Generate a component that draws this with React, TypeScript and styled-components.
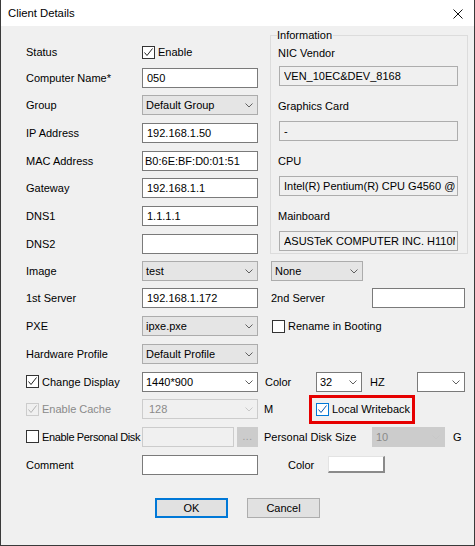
import React from 'react'
import styled, { createGlobalStyle } from 'styled-components'

const GlobalStyle = createGlobalStyle`
  html, body {
    margin: 0;
    padding: 0;
    background: #ffffff;
  }
  body {
    font-family: "Liberation Sans", Arial, sans-serif;
    font-size: 11px;
    color: #000000;
  }
  * {
    box-sizing: border-box;
  }
`

type CheckTone = 'normal' | 'disabled' | 'focus'
type ComboTone = 'list' | 'edit' | 'disabled' | 'locked'
type BoxTone = 'normal' | 'info' | 'disabled'

function Chevron({ muted }: { muted?: boolean }) {
  return (
    <svg width="8" height="5" viewBox="0 0 8 5">
      <polyline
        points="0.5,0.5 4,4 7.5,0.5"
        fill="none"
        stroke={muted ? '#c8c8c8' : '#606060'}
        strokeWidth="1"
      />
    </svg>
  )
}

function CheckBox({ checked, tone = 'normal' }: { checked?: boolean; tone?: CheckTone }) {
  const stroke = tone === 'disabled' ? '#b4b4b4' : tone === 'focus' ? '#0a58b0' : '#222222'
  return (
    <Box $tone={tone}>
      {checked && (
        <svg width="11" height="11" viewBox="0 0 11 11">
          <polyline points="1.5,5.5 4,8.5 9.5,1.5" fill="none" stroke={stroke} strokeWidth="1" />
        </svg>
      )}
    </Box>
  )
}

function Combo({
  value,
  w,
  ml,
  tone = 'list',
}: {
  value?: string
  w: number
  ml?: number
  tone?: ComboTone
}) {
  return (
    <ComboFrame $w={w} $ml={ml} $tone={tone}>
      <ComboText $tone={tone}>{value}</ComboText>
      <ArrowSlot>
        <Chevron muted={tone === 'disabled' || tone === 'locked'} />
      </ArrowSlot>
    </ComboFrame>
  )
}

function InfoItem({ label, value, first }: { label: string; value: string; first?: boolean }) {
  return (
    <InfoBlock $first={first}>
      <InfoLabel>{label}</InfoLabel>
      <TextBox $w={179} $ml={1} $tone="info" readOnly value={value} />
    </InfoBlock>
  )
}

export default function App() {
  return (
    <>
      <GlobalStyle />
      <Window>
        <TitleBar>
          <Title>Client Details</Title>
          <CloseButton aria-label="Close">
            <svg width="10" height="10" viewBox="0 0 10 10">
              <path d="M0.5 0.5 L9.5 9.5 M9.5 0.5 L0.5 9.5" stroke="#111" strokeWidth="1" />
            </svg>
          </CloseButton>
        </TitleBar>

        <Body>
          <Form>
            {/* ── Top: identity fields + information box ───────────── */}
            <TopSection>
              <LeftColumn>
                <StatusRow>
                  <Label $w={116}>Status</Label>
                  <CheckField>
                    <CheckBox checked />
                    Enable
                  </CheckField>
                </StatusRow>
                <Row>
                  <Label $w={116}>Computer Name*</Label>
                  <TextBox $w={116} readOnly value="050" />
                </Row>
                <Row>
                  <Label $w={116}>Group</Label>
                  <Combo w={116} value="Default Group" />
                </Row>
                <Row>
                  <Label $w={116}>IP Address</Label>
                  <TextBox $w={116} readOnly value="192.168.1.50" />
                </Row>
                <Row>
                  <Label $w={116}>MAC Address</Label>
                  <TextBox $w={116} $pad={2} readOnly value="B0:6E:BF:D0:01:51" />
                </Row>
                <Row>
                  <Label $w={116}>Gateway</Label>
                  <TextBox $w={116} readOnly value="192.168.1.1" />
                </Row>
                <Row>
                  <Label $w={116}>DNS1</Label>
                  <TextBox $w={116} readOnly value="1.1.1.1" />
                </Row>
                <Row>
                  <Label $w={116}>DNS2</Label>
                  <TextBox $w={116} readOnly value="" />
                </Row>
              </LeftColumn>

              <InfoGroup>
                <InfoLegend>Information</InfoLegend>
                <InfoList>
                  <InfoItem first label="NIC Vendor" value="VEN_10EC&DEV_8168" />
                  <InfoItem label="Graphics Card" value="-" />
                  <InfoItem label="CPU" value="Intel(R) Pentium(R) CPU G4560 @ 3.50GHz" />
                  <InfoItem label="Mainboard" value="ASUSTeK COMPUTER INC. H110M-F" />
                </InfoList>
              </InfoGroup>
            </TopSection>

            {/* ── Lower rows ───────────────────────────────────────── */}
            <LowerSection>
              <Row>
                <Label $w={116}>Image</Label>
                <Combo w={116} value="test" />
                <Combo w={92} ml={13} value="None" />
              </Row>
              <Row>
                <Label $w={116}>1st Server</Label>
                <TextBox $w={116} readOnly value="192.168.1.172" />
                <Label $w={101} $ml={13}>2nd Server</Label>
                <TextBox $w={93} readOnly value="" />
              </Row>
              <Row>
                <Label $w={116}>PXE</Label>
                <Combo w={116} value="ipxe.pxe" />
                <CheckField $ml={14}>
                  <CheckBox />
                  Rename in Booting
                </CheckField>
              </Row>
              <Row>
                <Label $w={116}>Hardware Profile</Label>
                <Combo w={116} value="Default Profile" />
              </Row>
              <Row>
                <CheckField $w={116}>
                  <CheckBox checked />
                  Change Display
                </CheckField>
                <Combo w={116} tone="edit" value="1440*900" />
                <Label $w={51} $ml={7}>Color</Label>
                <Combo w={46} tone="edit" value="32" />
                <Label $w={47} $ml={8}>HZ</Label>
                <Combo w={48} tone="edit" value="" />
              </Row>
              <Row>
                <CheckField $w={116} $muted>
                  <CheckBox checked tone="disabled" />
                  Enable Cache
                </CheckField>
                <Combo w={116} tone="disabled" value="128" />
                <Label $w={48} $ml={6}>M</Label>
                <Highlight>
                  <CheckField>
                    <CheckBox checked tone="focus" />
                    Local Writeback
                  </CheckField>
                </Highlight>
              </Row>
              <Row>
                <CheckField $w={116} $tight>
                  <CheckBox />
                  Enable Personal Disk
                </CheckField>
                <TextBox $w={92} $tone="disabled" readOnly value="" />
                <BrowseButton>...</BrowseButton>
                <Label $w={108} $ml={6}>Personal Disk Size</Label>
                <Combo w={73} tone="locked" value="10" />
                <Label $ml={8}>G</Label>
              </Row>
              <Row>
                <Label $w={116}>Comment</Label>
                <TextBox $w={116} readOnly value="" />
                <Label $w={40} $ml={30}>Color</Label>
                <ColorSwatch />
              </Row>
            </LowerSection>
          </Form>

          <ButtonRow>
            <DialogButton $default>OK</DialogButton>
            <DialogButton>Cancel</DialogButton>
          </ButtonRow>
        </Body>
      </Window>
    </>
  )
}

// ── Styled Components ────────────────────────────────────────────────────────

const Window = styled.div`
  width: 475px;
  height: 546px;
  display: flex;
  flex-direction: column;
  border: 1px solid #3a3a3a;
  border-top: none;
  background: #f0f0f0;
  overflow: hidden;
`

const TitleBar = styled.div`
  height: 26px;
  flex: 0 0 auto;
  display: flex;
  align-items: center;
  padding-left: 7px;
  background: #ffffff;
`

const Title = styled.div`
  flex: 1;
  font-size: 11.3px;
  color: #000000;
`

const CloseButton = styled.div`
  width: 32px;
  height: 26px;
  display: flex;
  align-items: center;
  justify-content: center;
  padding-top: 1px;
`

const Body = styled.div`
  flex: 1;
  display: flex;
  flex-direction: column;
  background: #f0f0f0;
`

const Form = styled.div`
  padding: 3px 0 0 25px;
  display: flex;
  flex-direction: column;
`

const TopSection = styled.div`
  display: flex;
  align-items: flex-start;
  gap: 12px;
`

const LeftColumn = styled.div`
  width: 232px;
  padding-top: 15px;
  display: flex;
  flex-direction: column;
  gap: 7.7px;
`

const Row = styled.div`
  height: 20px;
  display: flex;
  align-items: center;
  white-space: nowrap;
`

const StatusRow = styled(Row)`
  height: 16px;
`

const LowerSection = styled.div`
  margin-top: 6.8px;
  display: flex;
  flex-direction: column;
  gap: 7.7px;
`

const Label = styled.span<{ $w?: number; $ml?: number }>`
  flex: 0 0 auto;
  width: ${(p) => (p.$w ? `${p.$w}px` : 'auto')};
  margin-left: ${(p) => p.$ml ?? 0}px;
  white-space: nowrap;
`

const CheckField = styled.label<{ $w?: number; $ml?: number; $muted?: boolean; $tight?: boolean }>`
  flex: 0 0 auto;
  width: ${(p) => (p.$w ? `${p.$w}px` : 'auto')};
  margin-left: ${(p) => p.$ml ?? 0}px;
  display: flex;
  align-items: center;
  gap: 3px;
  white-space: nowrap;
  letter-spacing: ${(p) => (p.$tight ? '-0.35px' : 'normal')};
  color: ${(p) => (p.$muted ? '#8a8a8a' : '#000000')};
`

const Box = styled.span<{ $tone: CheckTone }>`
  flex: 0 0 auto;
  width: 13px;
  height: 13px;
  display: flex;
  border: 1px solid
    ${(p) => (p.$tone === 'disabled' ? '#cccccc' : p.$tone === 'focus' ? '#0078d7' : '#333333')};
  background: ${(p) => (p.$tone === 'disabled' ? '#f0f0f0' : '#ffffff')};
`

const TextBox = styled.input<{ $w: number; $ml?: number; $tone?: BoxTone; $pad?: number }>`
  flex: 0 0 auto;
  width: ${(p) => p.$w}px;
  height: 20px;
  margin: 0 0 0 ${(p) => p.$ml ?? 0}px;
  padding: 0 2px 0 ${(p) => p.$pad ?? 4}px;
  font: inherit;
  color: #000000;
  outline: none;
  border: 1px solid
    ${(p) => (p.$tone === 'info' ? '#adadad' : p.$tone === 'disabled' ? '#cccccc' : '#7a7a7a')};
  background: ${(p) => (p.$tone === 'normal' || !p.$tone ? '#ffffff' : '#f0f0f0')};
  border-radius: 0;
`

const ComboFrame = styled.div<{ $w: number; $ml?: number; $tone: ComboTone }>`
  flex: 0 0 auto;
  width: ${(p) => p.$w}px;
  height: 20px;
  margin-left: ${(p) => p.$ml ?? 0}px;
  display: flex;
  align-items: center;
  border: 1px solid
    ${(p) =>
      p.$tone === 'list' ? '#acacac' : p.$tone === 'edit' ? '#7a7a7a' : '#cccccc'};
  background: ${(p) =>
    p.$tone === 'list'
      ? '#e5e5e5'
      : p.$tone === 'edit'
        ? '#ffffff'
        : p.$tone === 'locked'
          ? '#cccccc'
          : '#f0f0f0'};
`

const ComboText = styled.span<{ $tone: ComboTone }>`
  flex: 1;
  overflow: hidden;
  padding-left: ${(p) => (p.$tone === 'disabled' ? 6 : 3)}px;
  color: ${(p) => (p.$tone === 'disabled' || p.$tone === 'locked' ? '#8a8a8a' : '#000000')};
`

const ArrowSlot = styled.span`
  width: 17px;
  height: 100%;
  display: flex;
  align-items: center;
  justify-content: center;
  padding-top: 1px;
`

const Highlight = styled.div`
  height: 23px;
  width: 100px;
  display: flex;
  align-items: center;
  padding-left: 4px;
  outline: 3px solid #e60000;
`

const BrowseButton = styled.div`
  flex: 0 0 auto;
  width: 21px;
  height: 20px;
  margin-left: 3px;
  display: flex;
  align-items: center;
  justify-content: center;
  background: #cccccc;
  border: 1px solid #cccccc;
  color: #9a9a9a;
  font-size: 10px;
  letter-spacing: 0.5px;
`

const ColorSwatch = styled.div`
  width: 57px;
  height: 17px;
  background: #ffffff;
  border-top: 1px solid #e3e3e3;
  border-left: 1px solid #e3e3e3;
  border-right: 2px solid #8a8a8a;
  border-bottom: 2px solid #8a8a8a;
`

const InfoGroup = styled.fieldset`
  width: 198px;
  margin: 0;
  padding: 4px 8px 2px 7px;
  min-width: 0;
  border: 1px solid #dcdcdc;
`

const InfoLegend = styled.legend`
  padding: 0 1px 0 0;
  margin-left: -1px;
  line-height: 13px;
  font-size: 11px;
`

const InfoList = styled.div`
  display: flex;
  flex-direction: column;
  gap: 13px;
`

const InfoBlock = styled.div<{ $first?: boolean }>`
  display: flex;
  flex-direction: column;
  gap: ${(p) => (p.$first ? 6 : 8)}px;
`

const InfoLabel = styled.div`
  line-height: 14px;
  height: 14px;
  white-space: nowrap;
`

const ButtonRow = styled.div`
  margin-top: 23.5px;
  display: flex;
  justify-content: center;
  gap: 19px;
`

const DialogButton = styled.div<{ $default?: boolean }>`
  width: 73px;
  height: 20px;
  display: flex;
  align-items: center;
  justify-content: center;
  background: #e1e1e1;
  border: ${(p) => (p.$default ? '2px solid #0078d7' : '1px solid #adadad')};
  color: #000000;
`
